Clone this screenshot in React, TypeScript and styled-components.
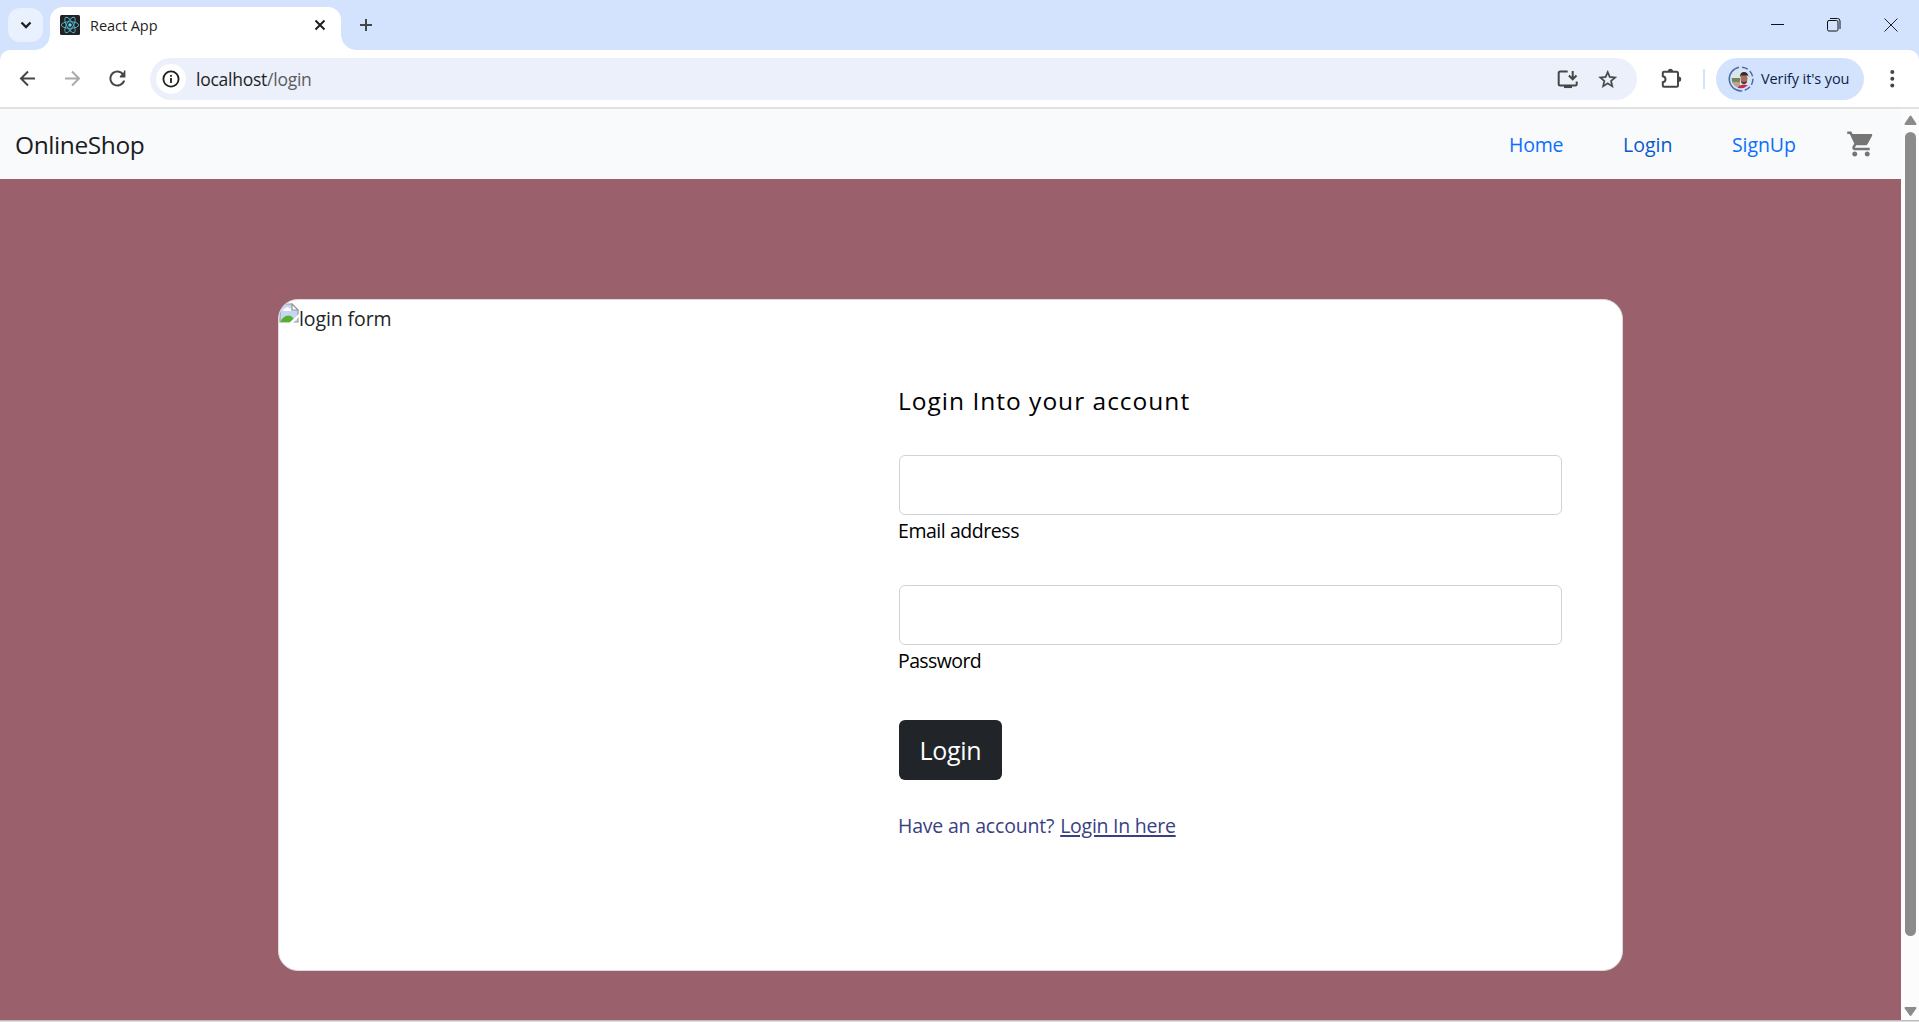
import React from "react";
import styled, { createGlobalStyle } from "styled-components";

const Global = createGlobalStyle`
  *, *::before, *::after { box-sizing: border-box; }
  html, body, #root { height: 100%; }
  body { margin: 0; overflow: hidden; font-family: "Open Sans", "Noto Sans", sans-serif; background: #fff; }
`;

const Label = styled.span<{ $size: number; $track?: number; $color?: string }>`
  font-size: ${(p) => p.$size}px;
  letter-spacing: ${(p) => p.$track ?? 0}px;
  color: ${(p) => p.$color ?? "inherit"};
  white-space: nowrap;
`;

const Browser = styled.div`
  height: 1022px;
  width: 1919px;
  display: flex;
  flex-direction: column;
  background: #d3e2fd;
`;
const TabStrip = styled.header`
  height: 50px;
  display: flex;
  flex: none;
  padding-left: 8px;
`;
const TabSearch = styled.button`
  width: 35px;
  height: 34px;
  margin-top: 8px;
  padding: 0;
  border: 0;
  border-radius: 12px;
  background: #e9f0fe;
  display: grid;
  place-items: center;
`;
const Tab = styled.div`
  position: relative;
  width: 291px;
  height: 43px;
  margin: 7px 0 0 7px;
  padding: 0 13px 8px 10px;
  border-radius: 13px 13px 0 0;
  background: #fff;
  display: flex;
  align-items: center;
  &::before, &::after {
    content: "";
    position: absolute;
    bottom: 0;
    width: 15px;
    height: 15px;
  }
  &::before { left: -15px; background: radial-gradient(circle at 0 0, transparent 14.5px, #fff 15px); }
  &::after { right: -15px; background: radial-gradient(circle at 100% 0, transparent 14.5px, #fff 15px); }
`;
const TabTitle = styled.div`
  flex: 1;
  padding: 2px 0 0 10px;
  line-height: 20px;
`;
const NewTab = styled.div`
  width: 20px;
  margin-left: 15px;
  height: 50px;
  display: grid;
  place-items: center;
`;
const WindowButtons = styled.div`
  margin-left: auto;
  display: flex;
  height: 49px;
`;
const WindowButton = styled.div`
  width: 57px;
  display: grid;
  place-items: center;
`;
const Toolbar = styled.div`
  height: 59px;
  flex: none;
  display: flex;
  align-items: center;
  background: #fff;
  border-bottom: 2px solid #e0e3e0;
  border-radius: 10px 10px 0 0;
  padding: 1px 0 0 16px;
`;
const NavIcon = styled.div`
  width: 24px;
  height: 24px;
  margin-right: 21px;
`;
const Omnibox = styled.div`
  width: 1487px;
  height: 42px;
  margin-left: -1px;
  border-radius: 21px;
  background: #ebf0fa;
  display: flex;
  align-items: center;
  padding: 0 18px 0 6px;
`;
const InfoChip = styled.div`
  width: 30px;
  height: 30px;
  border-radius: 50%;
  background: #fff;
  display: grid;
  place-items: center;
  margin-right: 10px;
`;
const Address = styled.div`
  flex: 1;
  line-height: 24px;
  display: flex;
`;
const OmniIcons = styled.div`
  display: flex;
  gap: 16px;
`;
const Extension = styled.div`
  width: 24px;
  height: 24px;
  margin-left: 22px;
`;
const Separator = styled.div`
  width: 2px;
  height: 20px;
  margin: 0 11px 0 20px;
  background: #d3e2fd;
`;
const Profile = styled.div`
  width: 148px;
  height: 42px;
  border-radius: 21px;
  background: #d3e2fd;
  display: flex;
  align-items: center;
  padding-left: 12px;
  gap: 7px;
  span { padding-bottom: 1px; }
`;
const MenuIcon = styled.div`
  width: 24px;
  height: 24px;
  margin-left: 16px;
`;
const Viewport = styled.div`
  height: 911px;
  display: flex;
  flex: none;
`;
const Page = styled.div`
  width: 1901px;
  display: flex;
  flex-direction: column;
`;
const Navbar = styled.nav`
  height: 70px;
  flex: none;
  background: #f8fafc;
  display: flex;
  align-items: center;
  padding: 4px 25px 0 15px;
`;
const Brand = styled.a`
  color: #1b1d1f;
  margin-right: auto;
  line-height: 38px;
`;
const NavLink = styled.a<{ $width: number }>`
  width: ${(p) => p.$width}px;
  line-height: 30px;
  padding-bottom: 2px;
`;
const CartIcon = styled.svg`
  width: 30px;
  height: 30px;
  fill: #757575;
  margin-bottom: 5px;
`;
const Section = styled.section`
  flex: 1;
  background: #9a616d;
  padding: 120px 0 0 278px;
`;
const Card = styled.div`
  width: 1345px;
  height: 672px;
  border: 1px solid #dadbdc;
  border-radius: 20px;
  background: #fff;
  display: flex;
  overflow: hidden;
`;
const Picture = styled.div`
  width: 560px;
  display: flex;
  align-items: flex-start;
  padding-top: 3px;
  color: #212529;
  svg { flex: none; }
  span { line-height: 30px; margin-top: 1px; }
`;
const Form = styled.form`
  flex: 1;
  padding: 83px 60px 0 60px;
  display: flex;
  flex-direction: column;
  color: #000;
`;
const Title = styled.h5`
  margin: 0 0 32px;
  font-weight: 400;
  line-height: 36px;
`;
const Field = styled.label<{ $gap: number }>`
  display: flex;
  flex-direction: column;
  line-height: 30px;
  margin-bottom: ${(p) => p.$gap}px;
  span { padding-top: 1px; }
`;
const Input = styled.input`
  width: 663px;
  height: 60px;
  margin-left: 1px;
  border: 1px solid #ced4da;
  border-radius: 6px;
  background: #fff;
  padding: 0 20px;
  font: inherit;
  outline: 0;
`;
const Submit = styled.button`
  width: 103px;
  height: 60px;
  margin-left: 1px;
  border: 0;
  border-radius: 6px;
  background: #212529;
  color: #fff;
  padding: 4px 0 0;
  font-family: inherit;
  line-height: 36px;
`;
const Hint = styled.p`
  margin: 31px 0 0;
  line-height: 30px;
  color: #393f81;
  display: flex;
`;
const HintLink = styled.a`
  margin-left: 6px;
  text-decoration: underline;
  text-underline-offset: 2px;
  text-decoration-thickness: 2px;
`;
const Scrollbar = styled.div`
  width: 18px;
  background: #fcfcfc;
  display: flex;
  flex-direction: column;
  align-items: center;
`;
const Thumb = styled.div`
  width: 11px;
  height: 804px;
  border-radius: 6px;
  background: #8b8b8b;
  margin: 7px 0 70px 1px;
`;
const WindowEdge = styled.div`
  height: 2px;
  background: #dcdcdc;
  border-top: 1px solid #bcbcbc;
`;

const ReactLogo = () => (
  <svg width="20" height="20" viewBox="0 0 20 20">
    <rect width="20" height="20" rx="1.5" fill="#222" />
    <g fill="none" stroke="#53b8cf" strokeWidth="0.9">
      <ellipse cx="10" cy="10" rx="8.7" ry="3.3" />
      <ellipse cx="10" cy="10" rx="8.7" ry="3.3" transform="rotate(60 10 10)" />
      <ellipse cx="10" cy="10" rx="8.7" ry="3.3" transform="rotate(120 10 10)" />
    </g>
    <circle cx="10" cy="10" r="1.7" fill="#61dafb" />
  </svg>
);

const Avatar = () => (
  <svg width="26" height="26" viewBox="0 0 26 26">
    <defs><clipPath id="face"><circle cx="13" cy="13" r="9.3" /></clipPath></defs>
    <g clipPath="url(#face)">
      <rect width="26" height="26" fill="#dce5e6" />
      <path d="M3 12h9v5H3z" fill="#73865f" />
      <path d="M3 16h9v7H3z" fill="#b9a58b" />
      <path d="M9 25q0-6 7-6.500 7 .5 7 6.500z" fill="#c32a55" />
      <ellipse cx="16" cy="12.8" rx="3.5" ry="4.8" fill="#a8705c" />
      <path d="M12 11q0-5 4-5t4.500 5l-1-1.500h-6z" fill="#332c31" />
      <path d="M13 15q3 2 6 0 0 3-3 3t-3-3z" fill="#4b3433" />
    </g>
    <path d="M13 24.900a11.900 11.900 0 0 1-2-23.600" fill="none" stroke="#4c6ca8" strokeWidth="1.5" />
    <path d="M13 1.100a11.900 11.900 0 0 1 0 23.800" fill="none" stroke="#4c6ca8" strokeWidth="1.5" strokeDasharray="6.200 2.500" strokeDashoffset="-1" />
  </svg>
);

const BrokenImage = () => (
  <svg width="20" height="20" viewBox="0 0 20 20">
    <path d="M1 1h12l6 6v12H1z" fill="#c5d5f3" stroke="#9a9a9a" strokeWidth="1.2" />
    <path d="M4 8q0-3 3-3 1-2 3 0 3 0 2 3z" fill="#fff" />
    <path d="M1.500 19q2-6 8-6.500 5 0 6 6.500z" fill="#58b030" />
    <path d="M13 1v6h6z" fill="#fff" stroke="#9a9a9a" strokeWidth="1.2" />
    <path d="M20 11v3l-6 6h-4z" fill="#fff" />
  </svg>
);

export default function App() {
  return (
    <>
      <Global />
      <Browser>
        <TabStrip>
          <TabSearch>
            <svg width="14" height="14" viewBox="0 0 14 14" fill="none" stroke="#1f1f1f" strokeWidth="2.3"><path d="M2.500 4.500 7 9l4.500-4.500" /></svg>
          </TabSearch>
          <Tab>
            <ReactLogo />
            <TabTitle><Label $size={14.5} $track={-0.05} $color="#1f1f1f">React App</Label></TabTitle>
            <svg width="16" height="16" viewBox="0 0 16 16" stroke="#1f1f1f" strokeWidth="2"><path d="m3.500 3.500 9 9m0-9-9 9" /></svg>
          </Tab>
          <NewTab><svg width="14" height="14" viewBox="0 0 14 14" stroke="#444746" strokeWidth="2"><path d="M1 7h12M7 1v12" /></svg></NewTab>
          <WindowButtons>
            <WindowButton><svg width="14" height="14" viewBox="0 0 14 14" stroke="#111" strokeWidth="1"><path d="M1 6.500h13" /></svg></WindowButton>
            <WindowButton><svg width="14" height="14" viewBox="0 0 14 14" fill="none" stroke="#111"><rect x=".5" y="2.500" width="10.500" height="10.500" rx="1.500" /><path d="M3 .5h7.500a2.500 2.500 0 0 1 2.500 2.500v8" /></svg></WindowButton>
            <WindowButton><svg width="14" height="14" viewBox="0 0 14 14" stroke="#222"><path d="m.5.5 13 13m0-13-13 13" /></svg></WindowButton>
          </WindowButtons>
        </TabStrip>
        <Toolbar>
          <NavIcon><svg width="24" height="24" viewBox="0 0 24 24" fill="none" stroke="#444746" strokeWidth="2"><path d="M19 11.500H5.500M12 4.500l-7 7 7 7" /></svg></NavIcon>
          <NavIcon><svg width="24" height="24" viewBox="0 0 24 24" fill="none" stroke="#aaa" strokeWidth="2"><path d="M4 11.500h13.500M11 4.500l7 7-7 7" /></svg></NavIcon>
          <NavIcon><svg width="24" height="24" viewBox="0.600 0.400 24 24" fill="#444746"><path d="M17.650 6.350C16.200 4.900 14.210 4 12 4c-4.420 0-7.990 3.580-7.990 8s3.570 8 7.990 8c3.730 0 6.840-2.550 7.730-6h-2.080c-.82 2.330-3.040 4-5.650 4-3.310 0-6-2.690-6-6s2.690-6 6-6c1.660 0 3.140.69 4.220 1.780L14.500 9.500V11H20V4h-1.500v1.500z" /></svg></NavIcon>
          <Omnibox>
            <InfoChip><svg width="18" height="18" viewBox="0 0 18 18" fill="none" stroke="#1f1f1f" strokeWidth="1.800"><circle cx="9" cy="9" r="7.600" /><path d="M9 8v5M9 5v1.800" /></svg></InfoChip>
            <Address><Label $size={17.5} $track={-0.25} $color="#1f1f1f">localhost</Label><Label $size={17.5} $track={-0.25} $color="#5a5d60">/login</Label></Address>
            <OmniIcons>
              <svg width="24" height="24" viewBox="0 0 24 24" fill="none" stroke="#444746" strokeWidth="2"><path d="M12.700 4.600H5.200A1.500 1.500 0 0 0 3.700 6.100v11a1.500 1.500 0 0 0 1.500 1.500h15a1.500 1.500 0 0 0 1.500-1.500V14.500M17.700 4v8M13.900 8.500l3.800 3.800 3.800-3.800" /><path d="M9 19.800h8" strokeWidth="2.500" /></svg>
              <svg width="24" height="24" viewBox="-1.860 -1.600 26.200 26.200" fill="#444746"><path d="m22 9.240-7.190-.62L12 2 9.190 8.630 2 9.240l5.460 4.730L5.820 21 12 17.270 18.180 21l-1.630-7.030zM12 15.400l-3.760 2.270 1-4.280-3.320-2.880 4.380-.38L12 6.100l1.710 4.040 4.380.38-3.320 2.880 1 4.280z" stroke="#444746" strokeWidth=".3" /></svg>
            </OmniIcons>
          </Omnibox>
          <Extension><svg width="24" height="24" viewBox="0 0 24 24"><path d="M5 4.700h12.500a1.500 1.500 0 0 1 1.500 1.500v12a1.500 1.500 0 0 1-1.500 1.500H5a1.200 1.200 0 0 1-1.200-1.200V15.200c1.700-.3 2.700-1.500 2.700-3s-1-2.700-2.700-3V5.900A1.200 1.200 0 0 1 5 4.700z" fill="none" stroke="#444746" strokeWidth="2" /><path d="M8.800 4.300a2.600 2.600 0 0 1 5.200 0zM19.600 9.600a2.600 2.600 0 0 1 0 5.200z" fill="#444746" /></svg></Extension>
          <Separator />
          <Profile><Avatar /><Label $size={14.5} $track={-0.1} $color="#0b1f4b">Verify it's you</Label></Profile>
          <MenuIcon><svg width="24" height="24" viewBox="0 0 24 24" fill="#444746"><circle cx="12.300" cy="5" r="2" /><circle cx="12.300" cy="11.800" r="2" /><circle cx="12.300" cy="18.500" r="2" /></svg></MenuIcon>
        </Toolbar>
        <Viewport>
          <Page>
            <Navbar>
              <Brand><Label $size={24.5} $track={-0.4}>OnlineShop</Label></Brand>
              <NavLink $width={114}><Label $size={19.5} $track={-0.2} $color="#0d6efd">Home</Label></NavLink>
              <NavLink $width={109}><Label $size={19.5} $color="#0a58ca">Login</Label></NavLink>
              <NavLink $width={114}><Label $size={19.5} $track={-0.1} $color="#0d6efd">SignUp</Label></NavLink>
              <CartIcon viewBox="0 0 24 24"><path d="M7 18c-1.100 0-1.990.9-1.990 2S5.900 22 7 22s2-.9 2-2-.9-2-2-2M1 2v2h2l3.600 7.590-1.350 2.450c-.16.280-.25.610-.25.960 0 1.100.9 2 2 2h12v-2H7.420c-.14 0-.25-.11-.25-.25l.03-.12.9-1.630h7.450c.75 0 1.410-.41 1.750-1.030l3.580-6.490c.08-.14.120-.31.120-.48 0-.55-.45-1-1-1H5.210l-.94-2zm16 16c-1.100 0-1.990.9-1.990 2s.890 2 1.990 2 2-.9 2-2-.9-2-2-2" /></CartIcon>
            </Navbar>
            <Section>
              <Card>
                <Picture><BrokenImage /><Label $size={19.5} $track={-0.1}>login form</Label></Picture>
                <Form>
                  <Title><Label $size={24.5} $track={1}>Login Into your account</Label></Title>
                  <Field $gap={39}><Input type="email" /><Label $size={19.5} $track={-0.45}>Email address</Label></Field>
                  <Field $gap={44}><Input type="password" /><Label $size={19.5} $track={-0.6}>Password</Label></Field>
                  <Submit type="button"><Label $size={25} $track={-0.3}>Login</Label></Submit>
                  <Hint><Label $size={19.5} $track={-0.2}>Have an account?</Label><HintLink><Label $size={19.5} $track={-0.25}>Login In here</Label></HintLink></Hint>
                </Form>
              </Card>
            </Section>
          </Page>
          <Scrollbar>
            <svg width="18" height="16" viewBox="0 0 18 16"><path d="M9.500 7.500 14.500 15H4.500z" fill="#8b8b8b" stroke="#8b8b8b" strokeWidth="2" strokeLinejoin="round" /></svg>
            <Thumb />
            <svg width="18" height="12" viewBox="0 0 18 12"><path d="M9.500 9 14.500 2H4.500z" fill="#8b8b8b" stroke="#8b8b8b" strokeWidth="2" strokeLinejoin="round" /></svg>
          </Scrollbar>
        </Viewport>
        <WindowEdge />
      </Browser>
    </>
  );
}
